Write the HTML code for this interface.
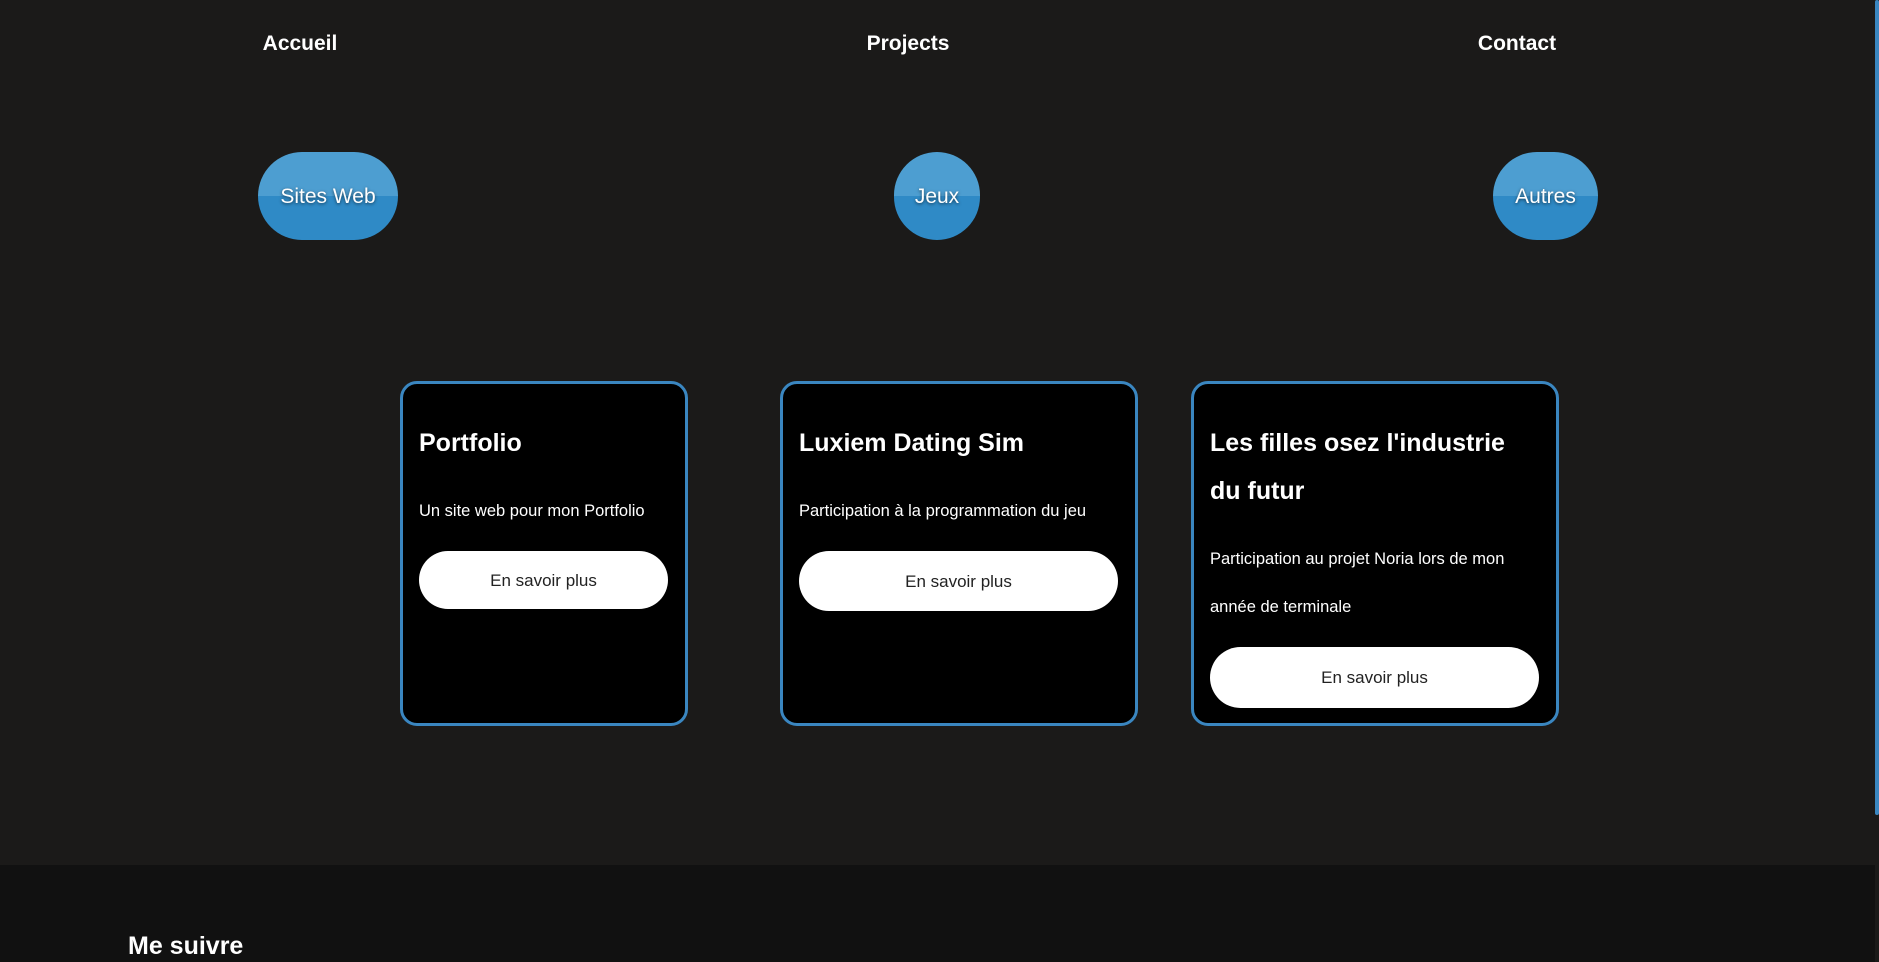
<!DOCTYPE html>
<html><head><meta charset="utf-8"><style>
*{margin:0;padding:0;box-sizing:border-box}
html,body{width:1879px;height:962px;overflow:hidden;background:#1b1a19;font-family:"Liberation Sans",sans-serif;color:#fff;position:relative}
.nav{position:absolute;top:32px;font-weight:bold;font-size:21px;transform:translateX(-50%)}
.pill{position:absolute;top:152px;height:88px;border-radius:44px;background:linear-gradient(#4d9ed1 0 50%,#2f8ac6 50% 100%);color:#fff;font-size:21px;display:flex;align-items:center;justify-content:center;padding-top:2px;text-shadow:0 1px 3px rgba(0,0,0,.6)}
.card{position:absolute;top:381px;height:345px;background:#000;border:3px solid #3a86c0;border-radius:17px;padding:35px 17px 0 16px}
.card h2{font-size:25px;line-height:48px;font-weight:bold}
.card p{font-size:16.5px;line-height:48px;margin-top:20px}
.btn{background:#fff;color:#222;border-radius:32px;display:flex;align-items:center;justify-content:center;font-size:17px;margin-top:16px;padding-top:1px}
.foot{position:absolute;left:0;top:865px;width:1875px;height:97px;background:#111}
.scroll{position:absolute;right:0;top:0;width:4px;height:815px;background:#3a86c0;border-radius:2px}
</style></head><body>
<div class="nav" style="left:300px">Accueil</div>
<div class="nav" style="left:908px">Projects</div>
<div class="nav" style="left:1517px">Contact</div>
<div class="pill" style="left:258px;width:140px">Sites Web</div>
<div class="pill" style="left:894px;width:86px">Jeux</div>
<div class="pill" style="left:1493px;width:105px">Autres</div>
<div class="card" style="left:400px;width:288px"><h2>Portfolio</h2><p>Un site web pour mon Portfolio</p><div class="btn" style="height:58px">En savoir plus</div></div>
<div class="card" style="left:780px;width:358px"><h2>Luxiem Dating Sim</h2><p>Participation à la programmation du jeu</p><div class="btn" style="height:60px">En savoir plus</div></div>
<div class="card" style="left:1191px;width:368px"><h2>Les filles osez l'industrie du futur</h2><p>Participation au projet Noria lors de mon année de terminale</p><div class="btn" style="height:61px">En savoir plus</div></div>
<div class="foot"><div style="position:absolute;left:128px;top:67px;font-size:25px;font-weight:bold">Me suivre</div></div>
<div class="scroll"></div>
</body></html>
